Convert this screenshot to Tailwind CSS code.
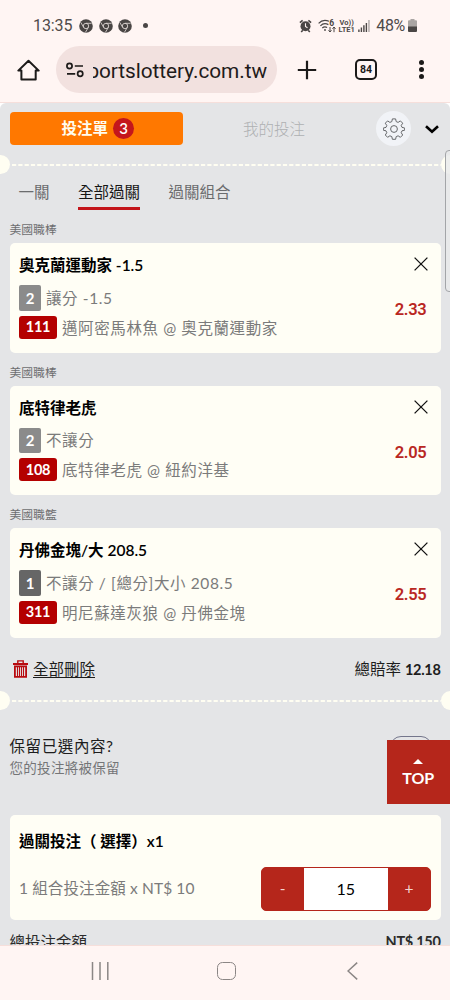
<!DOCTYPE html>
<html lang="zh-Hant">
<head>
<meta charset="utf-8">
<meta name="viewport" content="width=device-width, initial-scale=1">
<title>投注單</title>
<script src="https://cdn.jsdelivr.net/npm/@tailwindcss/browser@4"></script>
</head>
<body class="bg-white">
<svg class="hidden">
  <defs>
    <symbol id="chrome" viewBox="0 0 14 14">
      <circle cx="7" cy="7" r="6.8" fill="#4a4645"/>
      <circle cx="7" cy="7" r="2.7" fill="none" stroke="#d9d1cf" stroke-width=".9"/>
      <path d="M7 4.3h5.600M4.7 8.4L1.8 3.4M9.3 8.4L6.4 13.4" stroke="#d9d1cf" stroke-width=".9" fill="none"/>
    </symbol>
    <symbol id="close" viewBox="0 0 14 14">
      <path d="M.6.6l12.8 12.8M13.4.6L.6 13.4" stroke="#111" stroke-width="1.3" fill="none"/>
    </symbol>
  </defs>
</svg>
<div class="flex h-[1000px] w-[450px] flex-col overflow-hidden font-['Lato','Noto_Sans_CJK_TC',sans-serif] text-[15.5px]">
  <header class="h-[103px] shrink-0 border-b border-[#f6dfdb] bg-[#fff5f3] font-['Roboto',sans-serif]">
    <div class="flex h-[46px] items-center pt-[5px] pl-[33px] pr-[33px] text-[16px] text-[#4f4b4a]">
      <span class="w-[41px] tracking-[-0.1px]">13:35</span>
      <div class="ml-[5px] flex gap-[5.7px]">
        <svg class="size-[14px]"><use href="#chrome"/></svg>
        <svg class="size-[14px]"><use href="#chrome"/></svg>
        <svg class="size-[14px]"><use href="#chrome"/></svg>
      </div>
      <span class="ml-[11px] size-[5px] rounded-full bg-[#4a4645]"></span>
      <div class="ml-auto flex items-center">
        <svg class="mr-[6px] h-[14px] w-[13px]" viewBox="0 0 13 14" fill="none" stroke="#4a4645">
          <circle cx="6.5" cy="7.3" r="5" fill="#4a4645" stroke="none"/>
          <path d="M.9 3.6L3.6 1.3M12.1 3.6L9.4 1.3M2.2 13l1.6-1.8M10.8 13l-1.6-1.8" stroke-width="1.6"/>
          <path d="M6.5 4.2v3.3l2 1.2" stroke="#fff5f3" stroke-width="1.1"/>
        </svg>
        <svg class="mr-[2px] h-[14px] w-[18px]" viewBox="0 0 18 14" fill="none" stroke="#4a4645" stroke-width="1.2">
          <path d="M.6 4.3C3.5 1.2 7.5.8 11 2.2M2.4 6.8c2.2-2.2 5.200-2.700 8-1.200M4.300 9c1.400-1.300 3.200-1.500 4.800-.5"/>
          <circle cx="7" cy="11" r=".9" fill="#4a4645" stroke="none"/>
          <path d="M12 8v5M10.500 11.300L12 13l1.500-1.700M16 13.200V8M14.500 9.800L16 8l1.500 1.800" stroke-width="1"/>
          <text x="11.300" y="7" font-size="8.500" font-weight="700" fill="#4a4645" stroke="none">6</text>
        </svg>
        <div class="mr-[3px] flex w-[17px] flex-col items-center text-[7.500px] leading-[7px] font-bold"><span>Vo))</span><span>LTE1</span></div>
        <svg class="mr-[6px] h-[12px] w-[12px]" viewBox="0 0 12 12">
          <path d="M.2 9.500h1.400V12H.2zM2.700 7.500h1.400V12H2.700zM5.200 5.200h1.400V12H5.200zM7.700 3h1.400v9H7.700z" fill="#4a4645"/><path d="M10.200 0h1.500v12h-1.500z" fill="#b5aeac"/>
        </svg>
        <span class="tracking-[-0.3px]">48%</span>
        <svg class="ml-[3px] h-[13px] w-[9px]" viewBox="0 0 9 13"><path d="M2.500 0h4v1.200H8q1 0 1 1V8H0V2.200q0-1 1-1h1.500z" fill="#aaa5a3"/><path d="M0 7.500h9V12q0 1-1 1H1q-1 0-1-1z" fill="#4a4645"/></svg>
      </div>
    </div>
    <div class="flex h-[47px] items-center">
      <svg class="ml-[17px] h-[22px] w-[23px]" viewBox="0 0 23 22" fill="none" stroke="#1c1a19" stroke-width="2">
        <path d="M1.300 11.600L11.500 1.700l10.200 9.900h-3V20.500H4.400v-8.900z" stroke-linejoin="round"/>
      </svg>
      <div class="ml-[16px] flex h-[47px] w-[221px] items-center rounded-full bg-[#f2e1df] pl-[10px]">
        <svg class="h-[16px] w-[18px]" viewBox="0 0 18 16" fill="none" stroke="#1c1a19" stroke-width="1.700">
          <circle cx="3.500" cy="4" r="2.600"/><path d="M8.800 4H17M1 11.800h8.200"/><circle cx="14.200" cy="11.800" r="2.600"/>
        </svg>
        <div class="ml-[9px] flex h-[34px] w-[174px] items-center justify-end overflow-hidden pt-[5px] text-[20.800px] tracking-[-0.050px] text-[#1f1b1a]"><span>portslottery.com.tw</span></div>
      </div>
      <svg class="ml-[20px] size-[20px]" viewBox="0 0 20 20"><path d="M10 .8v18.400M.8 10h18.400" stroke="#1c1a19" stroke-width="2.200"/></svg>
      <div class="ml-[38px] flex h-[21px] w-[22px] items-center justify-center rounded-[5px] border-2 border-[#1c1a19] text-[10.500px] font-bold text-[#1c1a19]">84</div>
      <div class="ml-[42px] flex flex-col gap-[2px]">
        <span class="size-[5px] rounded-full bg-[#1c1a19]"></span><span class="size-[5px] rounded-full bg-[#1c1a19]"></span><span class="size-[5px] rounded-full bg-[#1c1a19]"></span>
      </div>
    </div>
  </header>

  <main class="relative h-[841.500px] shrink-0 overflow-hidden rounded-t-[6px] bg-[#e4e5e7]">
    <div class="flex h-[51px] items-center pl-[9.500px]">
      <div class="flex h-[33px] w-[173.500px] items-center justify-center gap-[5px] rounded-[4px] bg-[#ff7800] pl-[3px] font-bold text-[#fffdf0]">
        <span class="pt-[1px]">投注單</span><span class="flex size-[21px] items-center justify-center rounded-full bg-[#c4161c] text-[15px] font-semibold text-white">3</span>
      </div>
      <span class="ml-[60px] pt-[2px] font-light text-[#aeb0b2]">我的投注</span>
      <span class="ml-[71px] flex size-[35px] items-center justify-center rounded-full bg-[#f1f3f7]">
        <svg class="size-[22px]" viewBox="0 0 22 22" fill="none" stroke="#66686b" stroke-width="1" stroke-linejoin="round">
          <circle cx="11" cy="11" r="3.400"/>
          <path d="M9.400.9h3.200l.6 2.700 1.900.8 2.300-1.500 2.300 2.300-1.500 2.300.8 1.900 2.700.6v2.200l-2.700.6-.8 1.900 1.500 2.300-2.300 2.300-2.300-1.500-1.900.8-.6 2.700H9.400l-.6-2.700-1.900-.8-2.300 1.500-2.300-2.300 1.500-2.300-.8-1.900-2.700-.6V10l2.700-.6.8-1.900-1.500-2.300 2.300-2.300 2.300 1.500 1.900-.8z"/>
        </svg>
      </span>
      <svg class="mt-[2px] ml-[14px] h-[9px] w-[14px]" viewBox="0 0 14 9"><path d="M1 1.300l6 5.500 6-5.500" fill="none" stroke="#000" stroke-width="2.600"/></svg>
    </div>
    <div class="flex h-[20px] items-center justify-between">
      <span class="-ml-[9.500px] size-[19px] shrink-0 rounded-full bg-[#fffef2]"></span>
      <svg class="mt-[1px] ml-[2px] h-[2px] w-[429px] shrink-0"><path d="M0 1h429" stroke="#fffef2" stroke-width="2" stroke-dasharray="4.200 2.100"/></svg>
      <span class="-mr-[10px] size-[19px] shrink-0 rounded-full bg-[#fffef2]"></span>
    </div>
    <nav class="flex h-[36px] gap-[28.500px] pl-[18.500px] leading-[36px] text-[#6b6c6e]">
      <span>一關</span><span class="h-[36px] border-b-[3px] border-[#c4161c] text-[#161616]">全部過關</span><span>過關組合</span>
    </nav>

    <div class="flex flex-col px-[9.500px]">
      <h3 class="h-[33px] pt-[7px] text-[11.800px] leading-[26px] text-[#6d6e70]">美國職棒</h3>
      <section class="flex h-[109.500px] justify-between rounded-[5px] bg-[#fffef5] pr-[12.500px] pl-[9.500px]">
        <div class="flex flex-col items-start pt-[10px]">
          <h4 class="mb-[8px] h-[24px] leading-[24px] font-semibold text-black">奧克蘭運動家 -1.5</h4>
          <div class="mb-[5px] flex h-[25.500px] items-center gap-[5px] tracking-[0.6px] text-[#7b7b7b]"><b class="flex h-full w-[22px] items-center justify-center rounded-[2px] bg-[#8b8b8b] text-[15px] tracking-normal text-white">2</b><span class="pt-[1px]">讓分 -1.5</span></div>
          <div class="flex h-[23px] items-center gap-[5px] tracking-[0.6px] text-[#7b7b7b]"><b class="flex h-full w-[38px] items-center justify-center rounded-[3px] bg-[#b40000] text-[14.500px] tracking-[-0.3px] text-white">111</b><span class="pt-[3px]">邁阿密馬林魚 @ 奧克蘭運動家</span></div>
        </div>
        <div class="flex flex-col items-end pt-[14px]"><svg class="size-[14px]"><use href="#close"/></svg><span class="mt-[27px] mr-[1.500px] font-['Roboto'] text-[16.500px] leading-[24px] font-semibold tracking-[-0.3px] text-[#b9271f]">2.33</span></div>
      </section>
      <h3 class="h-[33px] pt-[7px] text-[11.800px] leading-[26px] text-[#6d6e70]">美國職棒</h3>
      <section class="flex h-[109.500px] justify-between rounded-[5px] bg-[#fffef5] pr-[12.500px] pl-[9.500px]">
        <div class="flex flex-col items-start pt-[10px]">
          <h4 class="mb-[8px] h-[24px] leading-[24px] font-semibold text-black">底特律老虎</h4>
          <div class="mb-[5px] flex h-[25.500px] items-center gap-[5px] tracking-[0.6px] text-[#7b7b7b]"><b class="flex h-full w-[22px] items-center justify-center rounded-[2px] bg-[#8b8b8b] text-[15px] tracking-normal text-white">2</b><span class="pt-[1px]">不讓分</span></div>
          <div class="flex h-[23px] items-center gap-[5px] tracking-[0.6px] text-[#7b7b7b]"><b class="flex h-full w-[38px] items-center justify-center rounded-[3px] bg-[#b40000] text-[14.500px] tracking-[-0.3px] text-white">108</b><span class="pt-[3px]">底特律老虎 @ 紐約洋基</span></div>
        </div>
        <div class="flex flex-col items-end pt-[14px]"><svg class="size-[14px]"><use href="#close"/></svg><span class="mt-[27px] mr-[1.500px] font-['Roboto'] text-[16.500px] leading-[24px] font-semibold tracking-[-0.3px] text-[#b9271f]">2.05</span></div>
      </section>
      <h3 class="h-[33px] pt-[7px] text-[11.800px] leading-[26px] text-[#6d6e70]">美國職籃</h3>
      <section class="flex h-[109.500px] justify-between rounded-[5px] bg-[#fffef5] pr-[12.500px] pl-[9.500px]">
        <div class="flex flex-col items-start pt-[10px]">
          <h4 class="mb-[8px] h-[24px] leading-[24px] font-semibold text-black">丹佛金塊/大 208.5</h4>
          <div class="mb-[5px] flex h-[25.500px] items-center gap-[5px] tracking-[0.6px] text-[#7b7b7b]"><b class="flex h-full w-[22px] items-center justify-center rounded-[2px] bg-[#666] text-[15px] tracking-normal text-white">1</b><span class="pt-[1px]">不讓分 / [總分]大小 208.5</span></div>
          <div class="flex h-[23px] items-center gap-[5px] tracking-[0.6px] text-[#7b7b7b]"><b class="flex h-full w-[38px] items-center justify-center rounded-[3px] bg-[#b40000] text-[14.500px] tracking-[-0.3px] text-white">311</b><span class="pt-[3px]">明尼蘇達灰狼 @ 丹佛金塊</span></div>
        </div>
        <div class="flex flex-col items-end pt-[14px]"><svg class="size-[14px]"><use href="#close"/></svg><span class="mt-[27px] mr-[1.500px] font-['Roboto'] text-[16.500px] leading-[24px] font-semibold tracking-[-0.3px] text-[#b9271f]">2.55</span></div>
      </section>
      <div class="flex h-[53px] items-center pt-[11px] pl-[3.500px] text-[#1d1d1d]">
        <svg class="mr-[5px] mb-[2px] h-[18px] w-[15px]" viewBox="0 0 15 18" fill="none" stroke="#b80b10">
          <path d="M0 4h15" stroke-width="2"/><path d="M4.800 3V.9h5.400V3" stroke-width="1.400"/>
          <path d="M1.900 6.300h11.200v10.500H1.900z" stroke-width="1.800"/><path d="M4.500 7v9.500M6.500 7v9.500M8.500 7v9.500M10.500 7v9.500" stroke-width="1.100"/>
        </svg>
        <span class="underline underline-offset-[2px]">全部刪除</span>
        <span class="ml-auto">總賠率 <b class="text-[14.500px] tracking-[-0.3px]">12.18</b></span>
      </div>
    </div>

    <div class="flex h-[20px] items-center justify-between">
      <span class="-ml-[9.500px] size-[19px] shrink-0 rounded-full bg-[#fffef2]"></span>
      <svg class="mt-[1px] ml-[2px] h-[2px] w-[429px] shrink-0"><path d="M0 1h429" stroke="#fffef2" stroke-width="2" stroke-dasharray="4.200 2.100"/></svg>
      <span class="-mr-[10px] size-[19px] shrink-0 rounded-full bg-[#fffef2]"></span>
    </div>

    <div class="px-[9.500px]">
      <div class="flex h-[104px] justify-between pt-[23px]">
        <div>
          <p class="h-[24px] leading-[24px] tracking-[0.6px] text-[#1d1d1d]">保留已選內容?</p>
          <p class="h-[20px] text-[13.500px] leading-[20px] tracking-[0.3px] text-[#747577]">您的投注將被保留</p>
        </div>
        <span class="mt-[2px] mr-[8.500px] h-[22px] w-[42px] rounded-full border border-[#74768c]"></span>
      </div>
      <section class="flex h-[105.500px] flex-col rounded-[5px] bg-[#fffef5] px-[9.500px] pt-[14px]">
        <h4 class="h-[24px] leading-[24px] font-semibold text-black">過關投注（ 選擇）x1</h4>
        <div class="mt-[14px] flex h-[44px] items-center justify-between text-[#7b7b7b]">
          <span class="tracking-[0.120px]">1 組合投注金額 x NT$ 10</span>
          <div class="flex h-[44px] w-[170.500px] overflow-hidden rounded-[5px] border border-[#b5261b] bg-[#b5261b] text-[#f3d3cf]">
            <span class="flex flex-1 items-center justify-center">-</span>
            <span class="flex w-[84px] items-center justify-center bg-white text-[16px] text-black">15</span>
            <span class="flex flex-1 items-center justify-center">+</span>
          </div>
        </div>
      </section>
      <div class="flex h-[44px] justify-between leading-[44px] text-[#2b2b2b]"><span>總投注金額</span><b class="text-[14.500px] tracking-[-0.3px]">NT$ 150</b></div>
    </div>

    <div class="absolute top-[47px] right-[-10px] h-[142px] w-[15px] rounded-[4px] border border-[#a3a5a8] bg-[#e9eaeb]/80"></div>
    <div class="absolute top-[637px] right-0 flex h-[63.500px] w-[63.500px] flex-col items-center bg-[#b5261b] pt-[19px] text-white">
      <svg class="h-[5px] w-[10px]" viewBox="0 0 10 5"><path d="M5 0l5 5H0z" fill="#fff"/></svg>
      <b class="mt-[3px] text-[16px] leading-[22px]">TOP</b>
    </div>
  </main>

  <footer class="flex flex-1 items-center border-t border-[#f6dfdb] bg-[#fff5f3] pb-[4px]">
    <svg class="ml-[91px] h-[18px] w-[18px]" viewBox="0 0 18 18"><path d="M1.500 0v18M9 0v18M16.800 0v18" stroke="#8b8685" stroke-width="1.500"/></svg>
    <span class="ml-[108px] size-[18.500px] rounded-[5.500px] border-[1.500px] border-[#8b8685]"></span>
    <svg class="ml-[111px] h-[18px] w-[11px]" viewBox="0 0 11 18"><path d="M10.200.6L1 9l9.200 8.400" fill="none" stroke="#8b8685" stroke-width="1.500"/></svg>
  </footer>
</div>
</body>
</html>
